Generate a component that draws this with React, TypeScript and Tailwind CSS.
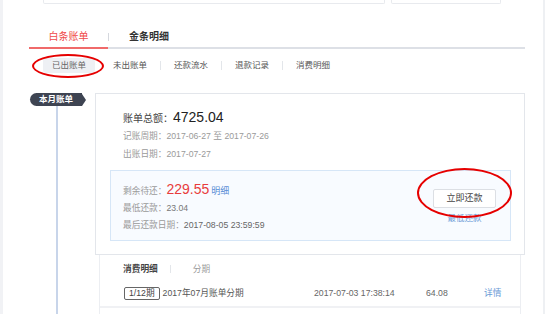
const subTabs = ["未出账单", "还款流水", "退款记录", "消费明细"];

export default function App() {
  return (
    <div className="relative h-[314px] w-[554px] overflow-hidden bg-white font-['Liberation_Sans','Noto_Sans_CJK_SC',sans-serif] text-[#333]">
      <div className="flex h-full">
        <div className="w-[3px] bg-[#f1f2f5]" />
        <div className="flex w-[540px] flex-col">
          {/* top cards (cut off) */}
          <div className="ml-[40px] flex gap-[6px]">
            <div className="h-[4px] w-[342px] rounded-b-[2px] border border-t-0 border-[#e8eaee]" />
            <div className="h-[4px] w-[110px] rounded-b-[2px] border border-t-0 border-[#e8eaee]" />
          </div>

          {/* main tabs */}
          <div className="ml-[26px] mt-[23px] flex w-[496px] items-center border-b-2 border-[#dde0e6]">
            <div className="-mb-[2px] h-[22px] w-[79px] border-b-2 border-[#f06a6a] text-center text-[10px] leading-[20px] text-[#f04a4a]">
              白条账单
            </div>
            <div className="h-[8px] w-px bg-[#d5d8de]" />
            <div className="h-[20px] w-[80px] text-center text-[10px] font-bold leading-[20px] text-[#333]">
              金条明细
            </div>
          </div>

          {/* sub tabs */}
          <div className="ml-[40px] mt-[9px] flex h-[15px] items-center text-[8.5px] text-[#555]">
            <div className="flex h-[15px] items-center rounded-[3px] bg-[#eef0f4] px-[9px] text-[#666]">已出账单</div>
            {subTabs.map((t, i) => (
              <div key={t} className="flex items-center">
                {i > 0 && <div className="ml-[13px] h-[9px] w-px bg-[#e3e6ea]" />}
                <span className={i === 0 ? "ml-[18px]" : "ml-[13px]"}>{t}</span>
              </div>
            ))}
          </div>

          {/* timeline */}
          <div className="mt-[20px] flex flex-1">
            <div className="flex w-[92px] flex-col">
              <div className="ml-[27px] flex items-center">
                <div className="flex h-[13px] w-[52px] items-center justify-center rounded-l-full rounded-r-[2px] bg-[#3e4452] text-[8.5px] font-bold text-white">
                  本月账单
                </div>
                <div className="h-0 w-0 border-y-[6px] border-l-[4px] border-y-transparent border-l-[#3e4452]" />
              </div>
              <div className="ml-[53px] w-[1.5px] flex-1 bg-[#c8d5ea]" />
            </div>

            <div className="flex flex-col">
              {/* bill card */}
              <div className="w-[430px] border border-[#e3e6eb] pb-[13px]">
                <div className="pl-[27px] pt-[14px]">
                  <div className="flex h-[18px] items-baseline leading-[18px]">
                    <span className="text-[10px] text-[#444]">账单总额：</span>
                    <span className="text-[14px] text-[#222]">4725.04</span>
                  </div>
                  <div className="mt-px text-[8.7px] leading-[18px] text-[#9a9a9a]">记账周期：2017-06-27 至 2017-07-26</div>
                  <div className="text-[8.7px] leading-[18px] text-[#9a9a9a]">出账日期：2017-07-27</div>
                </div>

                <div className="ml-[14px] mt-[7px] flex h-[71px] w-[401px] justify-between border border-[#d6e6f7] bg-[#f8fbff]">
                  <div className="pl-[12px] pt-[9px]">
                    <div className="flex h-[18px] items-baseline leading-[18px]">
                      <span className="text-[8.7px] text-[#9a9a9a]">剩余待还：</span>
                      <span className="text-[14px] text-[#e83c3c]">229.55</span>
                      <span className="ml-[2px] text-[9px] text-[#5b8fd6]">明细</span>
                    </div>
                    <div className="mt-px text-[8.7px] leading-[18px] text-[#9a9a9a]">
                      最低还款：<span className="text-[#777]">23.04</span>
                    </div>
                    <div className="text-[8.7px] leading-[16px] text-[#9a9a9a]">
                      最后还款日期：<span className="text-[#666]">2017-08-05 23:59:59</span>
                    </div>
                  </div>
                  <div className="mr-[14px] mt-[18px] flex w-[63px] flex-col items-center">
                    <div className="flex h-[19px] w-[63px] items-center justify-center rounded-[2px] border border-[#dcdfe4] bg-white text-[9px] text-[#444]">
                      立即还款
                    </div>
                    <div className="mt-[4px] text-[8.5px] leading-[12px] text-[#6a9ad6]">最低还款</div>
                  </div>
                </div>
              </div>

              {/* detail section */}
              <div className="ml-[4px] flex w-[422px] flex-1 flex-col border-x border-[#eceef2]">
                <div className="flex items-center pl-[23px] pt-[7px] text-[8.7px] leading-[14px]">
                  <span className="font-bold text-[#444]">消费明细</span>
                  <div className="ml-[12px] h-[8px] w-px bg-[#e3e6ea]" />
                  <span className="ml-[22px] text-[#9a9a9a]">分期</span>
                </div>
                <div className="mt-[6px] flex h-[26px] items-center border-b-2 border-[#f0f1f4] pl-[24px] text-[8.7px] text-[#555]">
                  <div className="flex w-[190px] items-center">
                    <span className="rounded-[2px] border border-[#666] px-[4px] leading-[11px] text-[#444]">1/12期</span>
                    <span className="ml-[3px] text-[#555]">2017年07月账单分期</span>
                  </div>
                  <span className="w-[112px] text-[#666]">2017-07-03 17:38:14</span>
                  <span className="w-[58px] text-[#666]">64.08</span>
                  <span className="text-[#6a9ad6]">详情</span>
                </div>
              </div>
            </div>
          </div>
        </div>
        <div className="w-[2px] bg-[#eef0f3]" />
      </div>

      {/* annotations */}
      <div className="absolute left-[32px] top-[54px] h-[24px] w-[72px] rounded-[50%] border-2 border-[#e60000]" />
      <div className="absolute left-[417px] top-[168px] h-[50px] w-[95px] rounded-[50%] border-2 border-[#e60000]" />
    </div>
  );
}
